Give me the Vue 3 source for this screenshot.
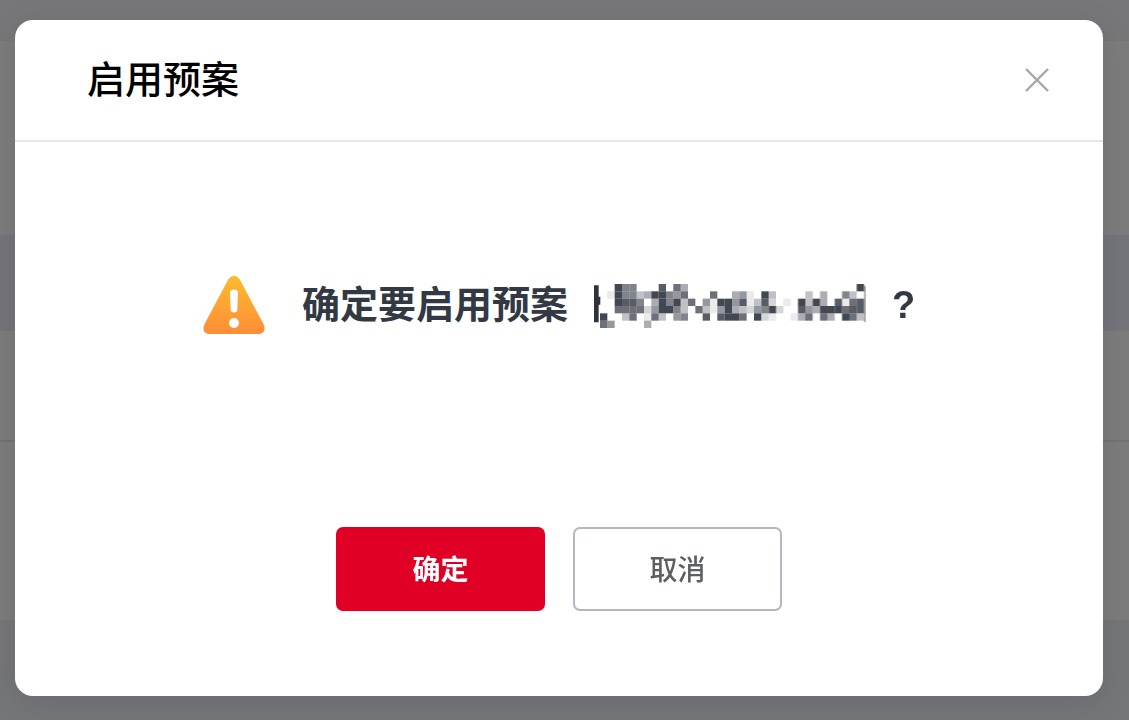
<script setup>
import { ref } from 'vue'

const open = ref(true)

// Opacity in tenths for each cell of the masked plan name.
const mask = [
  '009660008074000000000000000000000009',
  '019663499657000700451093000030400630',
  '009886049693705199581382010939408178',
  '007777259963073159432569200854999788',
  '900370173056008089970921001470740973',
  '750000400000000000000000000000000000',
]
const cells = mask.flatMap((row, y) =>
  [...row].map((level, x) => ({ x: x * 22, y: y * 22, level: Number(level) / 10 }))
).filter((cell) => cell.level > 0)
</script>

<template>
  <div class="screen">
    <div class="page" aria-hidden="true">
      <div class="band toolbar"></div>
      <div class="band upper"></div>
      <div class="band heading"></div>
      <div class="band row"></div>
      <div class="band list"></div>
      <div class="band footer"></div>
    </div>

    <section v-if="open" class="dialog" role="dialog" aria-modal="true" aria-labelledby="dialog-title">
      <header class="header">
        <h1 id="dialog-title" class="title">启用预案</h1>
        <button class="close" type="button" aria-label="关闭" @click="open = false">
          <svg viewBox="0 0 26 26" width="26" height="26" aria-hidden="true">
            <path d="M2 2 24 24M24 2 2 24" fill="none" stroke="#a5a7ac" stroke-width="2.4" />
          </svg>
        </button>
      </header>

      <div class="content">
        <svg class="warning" viewBox="0 0 62 60" width="62" height="60" aria-hidden="true">
          <defs>
            <linearGradient id="warning-fill" x1="0" y1="0" x2="0" y2="1">
              <stop offset="0" stop-color="#fdbb2d" />
              <stop offset="1" stop-color="#ff8d38" />
            </linearGradient>
          </defs>
          <path d="M25.500 4Q31-2.500 36.500 4L60.500 49Q64 58 56 59H6Q-2 58 1.500 49Z" fill="url(#warning-fill)" />
          <path d="M27 17.500Q27 14.500 31 14.500T35 17.500L34.300 35Q34 37.500 31 37.500T27.700 35Z" fill="#fff" />
          <circle cx="31" cy="48" r="5" fill="#fff" />
        </svg>
        <p class="message">
          <span>确定要启用预案</span>
          <svg class="masked" viewBox="-18 -6 816 138" width="272" height="46" aria-hidden="true">
            <defs>
              <filter id="mask-soften">
                <feGaussianBlur stdDeviation="2" />
              </filter>
            </defs>
            <g fill="#2d333e" filter="url(#mask-soften)">
              <path d="M-18 4H-4V38H1V62H-4V115H-18Z" />
              <rect
                v-for="cell in cells"
                :key="`${cell.x}-${cell.y}`"
                :x="cell.x"
                :y="cell.y"
                width="22"
                height="22"
                :opacity="cell.level"
              />
              <path d="M792 6H798V114H792Z" opacity=".45" />
            </g>
          </svg>
          <span>?</span>
        </p>
      </div>

      <footer class="actions">
        <button class="button primary" type="button" @click="open = false">确定</button>
        <button class="button" type="button" @click="open = false">取消</button>
      </footer>
    </section>
  </div>
</template>

<style>
body {
  margin: 0;
}
</style>

<style scoped>
.screen {
  position: relative;
  box-sizing: border-box;
  min-height: 100vh;
  padding: 20px 26px 24px 15px;
  overflow: hidden;
  display: flex;
  font-family: "Liberation Sans", "Noto Sans CJK SC", sans-serif;
}

.page {
  position: absolute;
  inset: 0;
  display: flex;
  flex-direction: column;
}

.band {
  background: #7c7c7c;
}

.toolbar {
  flex: 41;
  background: #77777a;
}

.upper {
  flex: 194;
}

.heading {
  flex: 96;
  background: #73757b;
}

.row {
  flex: 109;
  border-bottom: 2px solid #727373;
}

.list {
  flex: 178;
}

.footer {
  flex: 100;
  background: #75767a;
}

.dialog {
  position: relative;
  flex: 1;
  display: flex;
  flex-direction: column;
  background: #fff;
  border-radius: 18px;
  box-shadow: 0 6px 32px rgba(0, 0, 0, 0.1);
}

.header {
  display: flex;
  align-items: center;
  justify-content: space-between;
  height: 120px;
  padding: 0 49px 0 72px;
  border-bottom: 2px solid #e5e6f0;
}

.title {
  margin: 0;
  color: #000;
  font-size: 38px;
  font-weight: 500;
  line-height: 56px;
}

.close {
  display: flex;
  padding: 4px;
  border: 0;
  background: none;
  cursor: pointer;
}

.content {
  flex: 1;
  display: flex;
  align-items: flex-start;
  justify-content: center;
  gap: 37px;
  padding: 133px 24px 0;
}

.message {
  display: flex;
  align-items: center;
  gap: 26px;
  margin: 0;
  color: #333943;
  font-size: 38px;
  font-weight: 700;
  line-height: 60px;
}

.actions {
  display: flex;
  justify-content: center;
  gap: 28px;
  padding-bottom: 85px;
}

.button {
  box-sizing: border-box;
  width: 209px;
  height: 84px;
  padding: 0 0 2px;
  border: 2px solid #b4b6c2;
  border-radius: 7px;
  background: #fff;
  color: #5d5f63;
  font-family: inherit;
  font-size: 28px;
  font-weight: 500;
  cursor: pointer;
}

.primary {
  border-color: #e00025;
  background: #e00025;
  color: #fff;
  font-weight: 700;
}
</style>
